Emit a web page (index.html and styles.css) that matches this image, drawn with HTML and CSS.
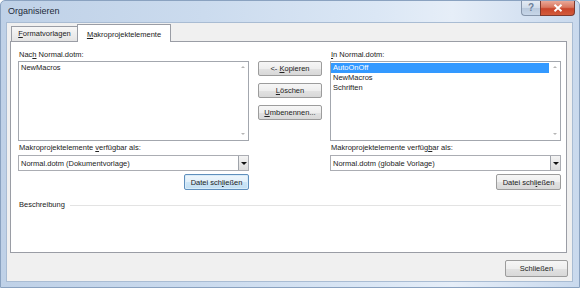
FILE: index.html
```html
<!DOCTYPE html>
<html lang="de">
<head>
  <meta charset="UTF-8" />
  <title>Organisieren</title>
  <link rel="stylesheet" href="styles.css">
</head>
<body>
  <div class="window">
    <div class="titlebar">
      <span class="title">Organisieren</span>
      <div class="caption-buttons">
        <span class="cap-help">?</span>
        <span class="cap-close">
          <svg width="10" height="8" viewBox="0 0 10 8"><path d="M1.5 0.8 L8.5 7.2 M8.5 0.8 L1.5 7.2" stroke="#fff" stroke-width="1.9" fill="none"/></svg>
        </span>
      </div>
    </div>

    <div class="client">
      <div class="tabs">
        <div class="tab tab-formats"><u>F</u>ormatvorlagen</div>
        <div class="tab tab-macros active"><u>M</u>akroprojektelemente</div>
      </div>

      <div class="panel">
        <div class="columns">
          <div class="side">
            <div class="label">Nac<u>h</u> Normal.dotm:</div>
            <div class="listbox">
              <div class="items">
                <div class="item">NewMacros</div>
              </div>
              <div class="scroll"><span class="arrow-up"></span><span class="arrow-down"></span></div>
            </div>
            <div class="label label-avail">Makroprojektelemente <u>v</u>erfügbar als:</div>
            <div class="combo">
              <span class="combo-text">Normal.dotm (Dokumentvorlage)</span>
              <span class="combo-drop"><span class="drop-arrow"></span></span>
            </div>
            <div class="side-actions">
              <button class="btn btn-default">Datei sch<u>l</u>ießen</button>
            </div>
          </div>

          <div class="middle">
            <button class="btn">&lt;- <u>K</u>opieren</button>
            <button class="btn"><u>L</u>öschen</button>
            <button class="btn"><u>U</u>mbenennen...</button>
          </div>

          <div class="side">
            <div class="label"><u>I</u>n Normal.dotm:</div>
            <div class="listbox">
              <div class="items">
                <div class="item selected">AutoOnOff</div>
                <div class="item">NewMacros</div>
                <div class="item">Schriften</div>
              </div>
              <div class="scroll"><span class="arrow-up"></span><span class="arrow-down"></span></div>
            </div>
            <div class="label label-avail">Makroprojektelemente verfüg<u>b</u>ar als:</div>
            <div class="combo">
              <span class="combo-text">Normal.dotm (globale Vorlage)</span>
              <span class="combo-drop"><span class="drop-arrow"></span></span>
            </div>
            <div class="side-actions">
              <button class="btn">Datei schl<u>i</u>eßen</button>
            </div>
          </div>
        </div>

        <div class="description">
          <span class="desc-label">Beschreibung</span>
          <span class="desc-line"></span>
        </div>
      </div>

      <div class="footer">
        <button class="btn btn-close">Schließen</button>
      </div>
    </div>
  </div>
</body>
</html>
```

FILE: styles.css
```css
html, body {
  margin: 0;
  padding: 0;
  width: 580px;
  height: 288px;
  overflow: hidden;
  font-family: 'Liberation Sans', Arial, sans-serif;
  font-size: 7.5px;
  color: #222;
}

u {
  text-decoration: underline;
}

.window {
  width: 580px;
  height: 288px;
  box-sizing: border-box;
  display: flex;
  flex-direction: column;
  border: 1px solid #8aa2c0;
  border-radius: 5px 5px 0 0;
  background: linear-gradient(to right, #bfd1e7 0%, #cbdbee 35%, #dbe7f5 65%, #e6eef8 78%, #c9d9ed 100%);
}

.titlebar {
  height: 21px;
  display: flex;
  align-items: flex-start;
}

.title {
  padding-left: 7px;
  line-height: 20px;
  font-size: 9px;
  color: #1e2a3a;
}

.caption-buttons {
  margin-left: auto;
  margin-right: 4px;
  display: flex;
}

.cap-help {
  width: 19px;
  height: 15px;
  box-sizing: border-box;
  border: 1px solid #8796ab;
  border-top: none;
  border-right: none;
  border-radius: 0 0 0 4px;
  background: linear-gradient(#e4ebf4 0%, #cfdbe9 50%, #b9c9dd 51%, #c7d6e8 100%);
  color: #6d7f99;
  font-size: 10px;
  font-weight: bold;
  text-align: center;
  line-height: 14px;
}

.cap-close {
  width: 35px;
  height: 15px;
  box-sizing: border-box;
  border: 1px solid #7e3a2f;
  border-top: none;
  border-radius: 0 0 4px 0;
  background: linear-gradient(#e9a898 0%, #d9775f 45%, #c9452b 55%, #d25b3c 100%);
  display: flex;
  align-items: center;
  justify-content: center;
}

.client {
  flex: 1;
  margin: 0 6px 5px 5px;
  border: 1px solid #a9bcd3;
  background: #f0f0f0;
  display: flex;
  flex-direction: column;
  padding: 1px 5px 4px 3px;
}

/* tabs */
.tabs {
  display: flex;
  align-items: flex-end;
  padding-left: 1px;
  position: relative;
  z-index: 2;
}

.tab {
  box-sizing: border-box;
  height: 15px;
  border: 1px solid #9a9da5;
  border-bottom: none;
  background: linear-gradient(#f7f7f7, #e4e4e4);
  text-align: center;
  line-height: 14px;
  margin-bottom: 0;
}

.tab-formats {
  width: 67px;
}

.tab-macros {
  width: 94px;
  margin-left: -1px;
}

.tab.active {
  height: 18px;
  background: #fff;
  margin-bottom: -1px;
  line-height: 19px;
}

.panel {
  flex: 1;
  background: #fff;
  border: 1px solid #9a9da5;
  padding: 8px 5px 0 7px;
}

.columns {
  display: flex;
}

.side {
  width: 231px;
  display: flex;
  flex-direction: column;
}

.label {
  line-height: 10px;
  padding-left: 1px;
}

.label-avail {
  margin-top: 2px;
}

.listbox {
  margin-top: 1px;
  height: 80px;
  box-sizing: border-box;
  border: 1px solid #a3a7ae;
  display: flex;
}

.items {
  flex: 1;
  padding-top: 1px;
}

.item {
  line-height: 10px;
  height: 10px;
  padding-left: 2px;
}

.item.selected {
  background: #3399ff;
  color: #fff;
}

.scroll {
  width: 11px;
  display: flex;
  flex-direction: column;
  justify-content: space-between;
  align-items: center;
  padding: 4px 0 5px;
}

.arrow-up, .arrow-down {
  width: 0;
  height: 0;
  border-left: 2px solid transparent;
  border-right: 2px solid transparent;
}

.arrow-up {
  border-bottom: 2px solid #b5b5b5;
}

.arrow-down {
  border-top: 2px solid #b5b5b5;
}

.combo {
  margin-top: 2px;
  height: 16px;
  box-sizing: border-box;
  border: 1px solid #abadb3;
  display: flex;
  align-items: center;
}

.combo-text {
  flex: 1;
  padding-left: 2px;
}

.combo-drop {
  width: 10px;
  height: 14px;
  box-sizing: border-box;
  border: 1px solid #9fa3aa;
  border-right: none;
  border-top: none;
  border-bottom: none;
  background: linear-gradient(#f4f4f4, #dcdcdc);
  display: flex;
  align-items: center;
  justify-content: center;
}

.drop-arrow {
  width: 0;
  height: 0;
  border-left: 3px solid transparent;
  border-right: 3px solid transparent;
  border-top: 3px solid #111;
}

.side-actions {
  margin-top: 3px;
  display: flex;
  justify-content: flex-end;
}

.btn {
  box-sizing: border-box;
  width: 65px;
  height: 16px;
  padding: 0;
  border: 1px solid #9c9c9c;
  border-radius: 2px;
  background: linear-gradient(#f6f6f6 0%, #eeeeee 50%, #e2e2e2 51%, #d8d8d8 100%);
  font-family: inherit;
  font-size: 7.5px;
  color: #222;
  text-align: center;
}

.btn-default {
  border-color: #5f8fbd;
  background: linear-gradient(#eef6fc 0%, #e2f0fa 50%, #cde6f7 51%, #c2def2 100%);
  box-shadow: inset 0 0 0 1px #d9ecf9;
}

.middle {
  width: 64px;
  margin: 11px 8px 0 9px;
  display: flex;
  flex-direction: column;
  gap: 7px;
}

.middle .btn {
  width: 64px;
  height: 15px;
}

.description {
  margin-top: 10px;
  display: flex;
  align-items: center;
  width: 543px;
  line-height: 10px;
}

.desc-label {
  padding-left: 1px;
}

.desc-line {
  flex: 1;
  margin-left: 5px;
  border-top: 1px solid #e3e3e3;
}

.footer {
  display: flex;
  justify-content: flex-end;
  padding-top: 7px;
}

.btn-close {
  width: 63px;
  height: 17px;
  margin-right: -1px;
}
```
